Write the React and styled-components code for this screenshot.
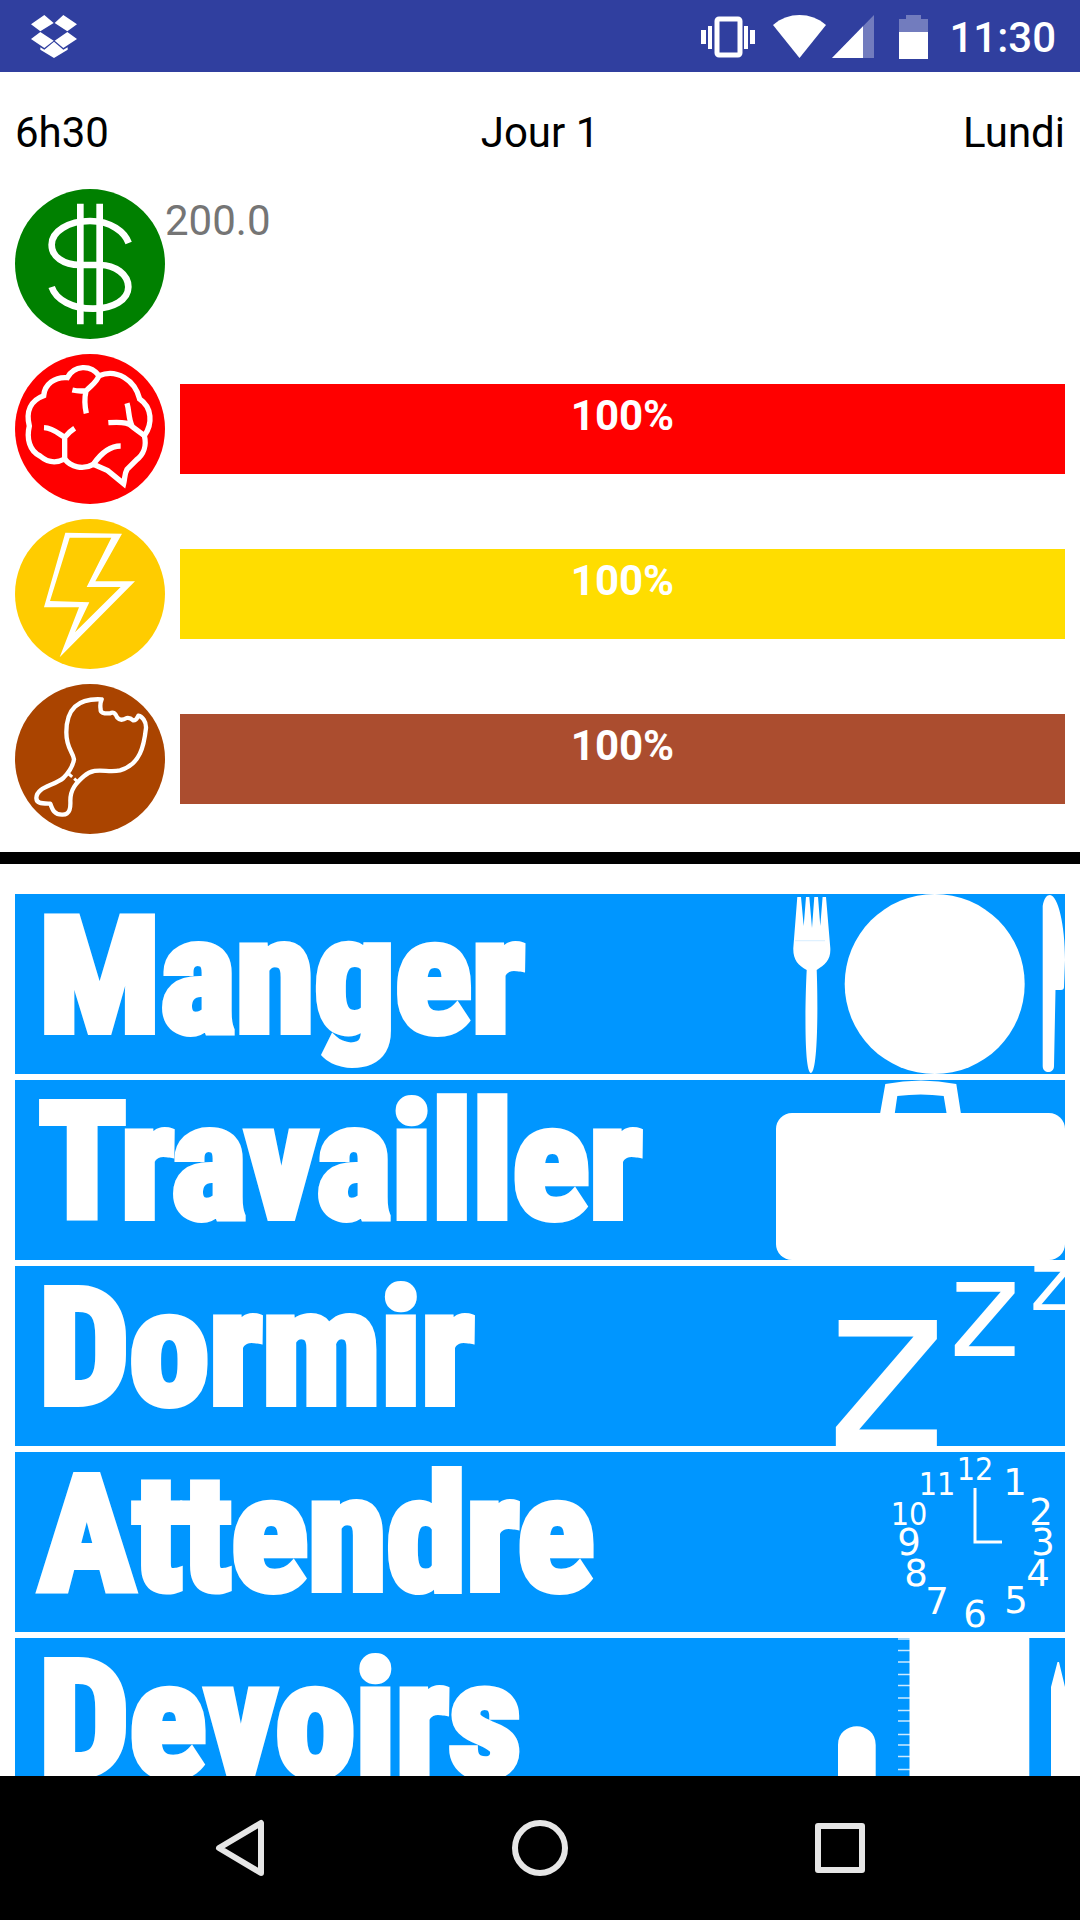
import React from "react";
import styled, { createGlobalStyle } from "styled-components";

const GlobalStyle = createGlobalStyle`
  * { box-sizing: border-box; }
  html, body { margin: 0; background: #ffffff; }
  body { font-family: Roboto, "Noto Sans", sans-serif; }
`;

const Screen = styled.div`
  display: flex;
  flex-direction: column;
  height: 100vh;
  background: #ffffff;
`;

const StatusBar = styled.header`
  display: flex;
  flex: none;
  align-items: center;
  justify-content: space-between;
  height: 72px;
  padding: 1px 24px 0 31px;
  background: #303f9f;
`;

const StatusGroup = styled.div`
  display: flex;
  align-items: center;
`;

const StatusIcon = styled.svg`
  display: block;
  margin-right: ${(p) => p.$after || 0}px;
  fill: #ffffff;
`;

const Clock = styled.time`
  padding-top: 2px;
  color: #ffffff;
  font-size: 42px;
  font-weight: 500;
  line-height: 48px;
`;

const DayHeader = styled.div`
  display: grid;
  flex: none;
  grid-template-columns: 1fr auto 1fr;
  padding: 36px 15px 32px;
  color: #000000;
  font-size: 42px;
  line-height: 49px;
`;

const DayName = styled.span`
  text-align: right;
`;

const Stats = styled.section`
  display: flex;
  flex: none;
  flex-direction: column;
  gap: 15px;
  padding: 0 15px 18px;
  border-bottom: 12px solid #000000;
`;

const StatRow = styled.div`
  display: flex;
  align-items: ${(p) => (p.$top ? "flex-start" : "center")};
  gap: ${(p) => (p.$top ? 0 : 15)}px;
`;

const Badge = styled.svg`
  display: block;
  flex: none;
  width: 150px;
  height: 150px;
  border-radius: 50%;
  background: ${(p) => p.$color};
  fill: none;
  stroke: #ffffff;
`;

const Money = styled.span`
  padding-top: 7px;
  color: #757575;
  font-size: 42px;
  line-height: 49px;
`;

const Gauge = styled.div`
  flex: 1;
  height: 90px;
  padding-top: 7px;
  background: ${(p) => p.$color};
  color: #ffffff;
  font-size: 42px;
  font-weight: 700;
  line-height: 49px;
  text-align: center;
`;

const Actions = styled.main`
  display: flex;
  flex: 1;
  flex-direction: column;
  gap: 6px;
  min-height: 0;
  padding: 30px 15px 0;
  overflow: hidden;
`;

const ActionButton = styled.button`
  display: flex;
  flex: none;
  align-items: flex-start;
  justify-content: space-between;
  height: 180px;
  padding: 0 0 0 24px;
  border: 0;
  background: #0096ff;
  color: #ffffff;
  overflow: hidden;
`;

const ActionLabel = styled.span`
  font-family: "Roboto Condensed", "Liberation Sans Narrow", "Liberation Sans", sans-serif;
  font-size: 160px;
  font-weight: 700;
  line-height: 166px;
  -webkit-text-stroke: 8px #ffffff;
`;

const ActionArt = styled.svg`
  display: block;
  flex: none;
  width: 300px;
  height: 180px;
  fill: #ffffff;
  font-family: "DejaVu Sans", sans-serif;
`;

const NavBar = styled.nav`
  display: flex;
  flex: none;
  height: 144px;
  padding: 0 90px;
  background: #000000;
`;

const NavButton = styled.button`
  display: flex;
  flex: 1;
  align-items: center;
  justify-content: center;
  padding: 0;
  border: 0;
  background: transparent;
`;

const NavIcon = styled.svg`
  width: 60px;
  height: 60px;
  fill: none;
  stroke: #e6e6e6;
  stroke-width: 6;
  stroke-linejoin: round;
`;

function DropboxIcon() {
  return (
    <StatusIcon width="46" height="43" viewBox="93 45 138 129">
      <path d="M93 73 133 45 161 69 121 94ZM164 69 190 45 231 73 202 94ZM93 117 121 96 161 122 133 144ZM164 122 202 96 231 117 190 144ZM121 142 133 149 162 125 190 149 203 142V149L162 174 121 149Z" />
    </StatusIcon>
  );
}

function VibrateIcon() {
  return (
    <StatusIcon $after={18} width="54" height="42" viewBox="0 0 54 42">
      <path d="M0 14h5v14H0zM7 10h4v23H7zM43 10h4v23h-4zM49 14h5v14h-5z" />
      <rect x="16" y="3" width="23" height="36" rx="2" fill="none" stroke="#ffffff" strokeWidth="5" />
    </StatusIcon>
  );
}

function WifiIcon() {
  return (
    <StatusIcon $after={6} width="53" height="43" viewBox="0 0 53 43">
      <path d="M26.500 43 0 10C15-3.300 38-3.300 53 10Z" />
    </StatusIcon>
  );
}

function SignalIcon() {
  return (
    <StatusIcon $after={25} width="42" height="43" viewBox="0 0 42 43">
      <path d="M42 0V43H0Z" opacity=".32" />
      <path d="M31 11.300V43H0Z" />
    </StatusIcon>
  );
}

function BatteryIcon() {
  return (
    <StatusIcon $after={21} width="29" height="44" viewBox="0 0 29 44">
      <path d="M7 0h15v4h7v13H0V4h7z" opacity=".32" />
      <path d="M0 17h29v27H0z" />
    </StatusIcon>
  );
}

function MoneyBadge() {
  return (
    <Badge $color="#008000" viewBox="45 567 450 450" aria-hidden="true">
      <path strokeWidth="20" d="M241 611V973M299 611V973" />
      <path strokeWidth="20" d="M386 729C374 696 333 663 270 663 205 663 155 694 155 734 155 770 190 795 240 795H300C345 795 385 823 385 861 385 899 340 926 279 926 218 926 168 900 155 861" />
    </Badge>
  );
}

function BrainBadge() {
  return (
    <Badge $color="#ff0000" viewBox="45 27 450 450" aria-hidden="true">
      <g strokeWidth="16">
        <path d="M202 98C223 60 272 58 297 92 350 70 405 105 419 162 456 187 459 236 433 272 440 300 432 328 409 345L381 373C373 387 375 400 371 416L323 377 280 358C248 376 213 366 194 342 164 358 140 350 120 333 88 317 79 280 88 243 77 199 92 166 131 152 134 117 165 95 202 98Z" />
        <path d="M297 92C289 114 274 120 258 138 253 160 254 183 259 205M217 135Q238 140 258 137M132 248C158 249 176 266 194 277Q207 261 224 250M194 277V342M325 233C377 229 389 237 397 245L433 272M397 245C385 222 388 198 381 175M280 358C300 329 325 303 362 303" />
      </g>
    </Badge>
  );
}

function EnergyBadge() {
  return (
    <Badge $color="#ffcc00" viewBox="45 522 450 450" aria-hidden="true">
      <path
        fill="#ffffff"
        fillRule="evenodd"
        stroke="none"
        d="M196 563 366 566 286 709H405L179 937 237 787H132ZM209 578 150 768 268 772 225 862 362 726H260L334 578Z"
      />
    </Badge>
  );
}

function FoodBadge() {
  return (
    <Badge $color="#aa4400" viewBox="45 42 450 450" aria-hidden="true">
      <path strokeWidth="13" strokeLinejoin="round" d="M305 88C233 84 199 117 199 187 199 236 219 246 222 268 219 286 205 309 190 324 161 348 110 350 109 384 110 401 124 400 151 401 158 421 164 435 188 434 211 433 212 411 211 392 211 354 233 336 251 319 286 288 320 310 360 301 421 284 432 227 438 174 439 153 426 139 415 137 412 143 409 152 399 151Q390 142 380 144 362 155 352 143 344 122 330 130 300 132 302 118 299 101 305 88Z" />
      <path strokeWidth="9" strokeDasharray="18 8" d="M203 309 236 338" />
    </Badge>
  );
}

function MealArt() {
  return (
    <ActionArt viewBox="0 0 300 180" aria-hidden="true">
      <path d="M32.300 3H36L38.700 32 41 3H44.300L47 34 49.300 3H53L55.300 32 57.600 3H61L65.300 54C66 66 60 71 51.700 76 53 110 53 178 46 179 39 178 40 110 41.700 76 33 71 28 66 28.300 54Z" />
      <path d="M30 46.700H60" stroke="#0096ff" strokeWidth="1" opacity=".15" />
      <circle cx="169.700" cy="90" r="90" />
      <path d="M277.700 12C279 4 282 1 285 1 293 2 300 30 300 66L299 93Q299 96 296 96H290.500L289 172C289 180 277.700 180 277.700 172Z" />
    </ActionArt>
  );
}

function BriefcaseArt() {
  return (
    <ActionArt viewBox="0 0 300 180" aria-hidden="true">
      <rect x="11" y="33" width="289" height="147" rx="16" />
      <path d="M115 34 120.300 4Q156-3 191.300 4L196 34H181.700L178.700 16Q156 13 132.300 16L129.700 34Z" />
    </ActionArt>
  );
}

function SleepArt() {
  return (
    <ActionArt viewBox="0 0 300 180" aria-hidden="true">
      <text x="61" y="180" fontSize="230">z</text>
      <text x="184" y="90" fontSize="136">z</text>
      <text x="265" y="44" fontSize="80">z</text>
    </ActionArt>
  );
}

const hours = [
  [1, 250, 43], [2, 276, 73], [3, 278, 103], [4, 273, 134], [5, 251, 161], [6, 210, 175],
  [7, 172, 162], [8, 151, 134], [9, 144, 103], [10, 144, 73], [11, 172, 43], [12, 210, 28],
];

function ClockArt() {
  return (
    <ActionArt viewBox="0 0 300 180" aria-hidden="true">
      {hours.map(([n, x, y]) => (
        <text
          key={n}
          x={x}
          y={y}
          textAnchor="middle"
          fontSize={n > 9 ? 32 : 37}
          fontFamily={n > 9 ? '"DejaVu Sans Condensed", "Roboto Condensed", sans-serif' : undefined}
        >
          {n}
        </text>
      ))}
      <path d="M210 36V90H237" fill="none" stroke="#ffffff" strokeWidth="3" />
    </ActionArt>
  );
}

function HomeworkArt() {
  return (
    <ActionArt viewBox="0 0 300 180" aria-hidden="true">
      <path d="M73 180V107C73 82 110.700 82 110.700 107V180ZM144.500 0H264.300V180H144.500ZM286 180V49L292.500 24H294L300 49V180Z" />
      <path d="M133 1h12M133 12.500h12M133 24h12M133 36.500h12M133 47.500h12M133 60h12M133 72.500h12M133 83h12M133 96.500h12M133 107h12M133 118.500h12M133 131.500h12M133 143h12M133 155h12" stroke="#ffffff" strokeWidth="1.500" opacity=".8" />
    </ActionArt>
  );
}

const gauges = [
  { name: "Moral", color: "#ff0000", value: 100, Icon: BrainBadge },
  { name: "Énergie", color: "#ffdd00", value: 100, Icon: EnergyBadge },
  { name: "Faim", color: "#ab4d2f", value: 100, Icon: FoodBadge },
];

const actions = [
  { label: "Manger", Art: MealArt },
  { label: "Travailler", Art: BriefcaseArt },
  { label: "Dormir", Art: SleepArt },
  { label: "Attendre", Art: ClockArt },
  { label: "Devoirs", Art: HomeworkArt },
];

export default function App() {
  return (
    <Screen>
      <GlobalStyle />
      <StatusBar>
        <DropboxIcon />
        <StatusGroup>
          <VibrateIcon />
          <WifiIcon />
          <SignalIcon />
          <BatteryIcon />
          <Clock>11:30</Clock>
        </StatusGroup>
      </StatusBar>
      <DayHeader>
        <span>6h30</span>
        <span>Jour 1</span>
        <DayName>Lundi</DayName>
      </DayHeader>
      <Stats>
        <StatRow $top>
          <MoneyBadge />
          <Money>200.0</Money>
        </StatRow>
        {gauges.map(({ name, color, value, Icon }) => (
          <StatRow key={name}>
            <Icon />
            <Gauge $color={color} role="progressbar" aria-label={name} aria-valuenow={value}>
              {value}%
            </Gauge>
          </StatRow>
        ))}
      </Stats>
      <Actions>
        {actions.map(({ label, Art }) => (
          <ActionButton key={label} type="button">
            <ActionLabel>{label}</ActionLabel>
            <Art />
          </ActionButton>
        ))}
      </Actions>
      <NavBar>
        <NavButton type="button" aria-label="Retour">
          <NavIcon viewBox="0 0 60 60"><path d="M51 5V55L9 30Z" /></NavIcon>
        </NavButton>
        <NavButton type="button" aria-label="Accueil">
          <NavIcon viewBox="0 0 60 60"><circle cx="30" cy="30" r="25" /></NavIcon>
        </NavButton>
        <NavButton type="button" aria-label="Applications récentes">
          <NavIcon viewBox="0 0 60 60"><rect x="8" y="8" width="44" height="44" /></NavIcon>
        </NavButton>
      </NavBar>
    </Screen>
  );
}
